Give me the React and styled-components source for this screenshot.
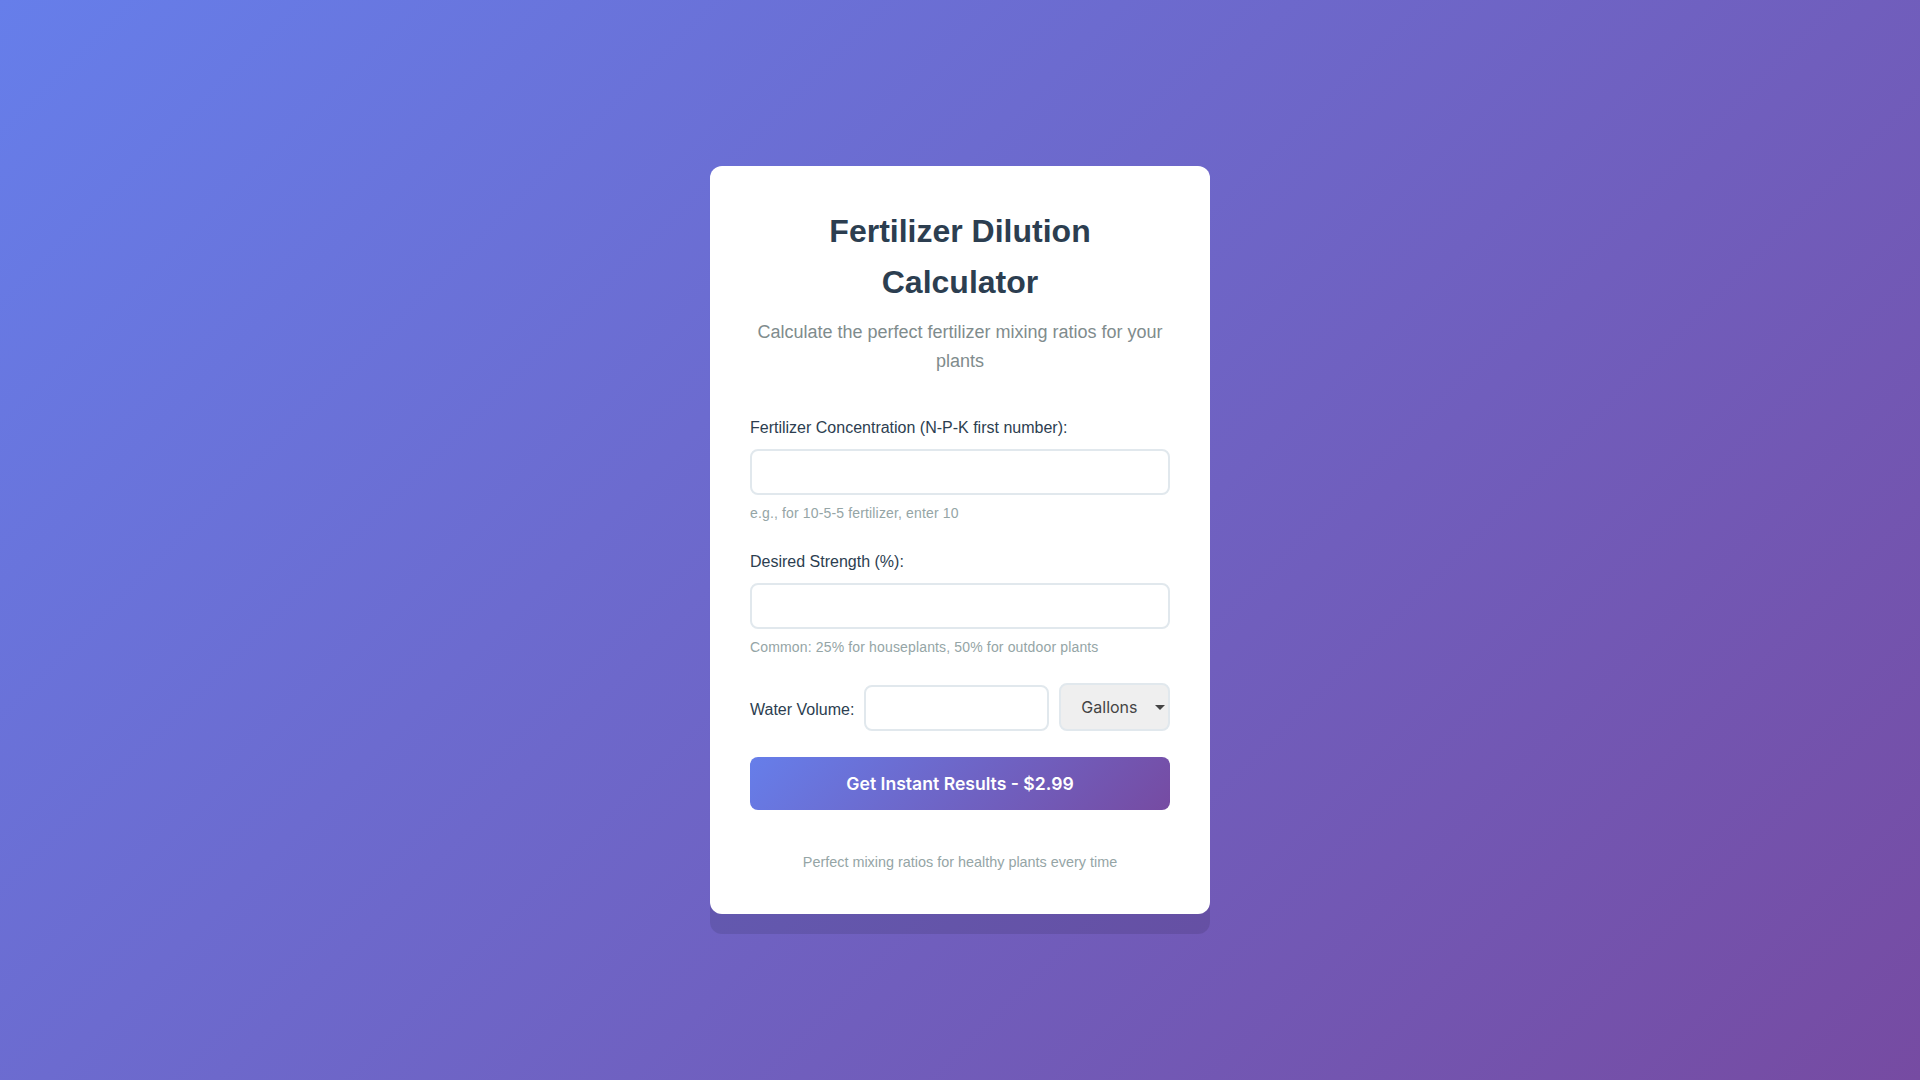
import styled, { createGlobalStyle } from "styled-components";

const GlobalStyle = createGlobalStyle`
  * {
    box-sizing: border-box;
  }
  html, body {
    margin: 0;
    padding: 0;
  }
  body {
    font-family: "Liberation Sans", Arial, sans-serif;
    line-height: 1.6;
    color: #2c3e50;
    background: linear-gradient(135deg, #667eea 0%, #764ba2 100%);
    min-height: 100vh;
  }
`;

export default function App() {
  return (
    <>
      <GlobalStyle />
      <Page>
        <Card>
          <Title>Fertilizer Dilution Calculator</Title>
          <Subtitle>Calculate the perfect fertilizer mixing ratios for your plants</Subtitle>

          <FormGroup>
            <Label htmlFor="concentration">Fertilizer Concentration (N-P-K first number):</Label>
            <Input id="concentration" type="number" />
            <Hint>e.g., for 10-5-5 fertilizer, enter 10</Hint>
          </FormGroup>

          <FormGroup>
            <Label htmlFor="strength">Desired Strength (%):</Label>
            <Input id="strength" type="number" />
            <Hint>Common: 25% for houseplants, 50% for outdoor plants</Hint>
          </FormGroup>

          <VolumeRow>
            <InlineLabel htmlFor="volume">Water Volume:</InlineLabel>
            <VolumeInput id="volume" type="number" />
            <SelectWrap>
              <Select defaultValue="gallons">
                <option value="gallons">Gallons</option>
                <option value="liters">Liters</option>
              </Select>
            </SelectWrap>
          </VolumeRow>

          <Button type="button">Get Instant Results - $2.99</Button>

          <Footer>Perfect mixing ratios for healthy plants every time</Footer>
        </Card>
      </Page>
    </>
  );
}

const Page = styled.div`
  min-height: 100vh;
  display: flex;
  align-items: center;
  justify-content: center;
`;

const Card = styled.div`
  width: 500px;
  background: #ffffff;
  border-radius: 12px;
  padding: 40px;
  box-shadow: 0 20px 0 rgba(0, 0, 0, 0.1);
  text-align: center;
`;

const Title = styled.h1`
  margin: 0 0 10px;
  font-size: 32px;
  line-height: 1.6;
  font-weight: 700;
  color: #2c3e50;
`;

const Subtitle = styled.p`
  margin: 0 0 39px;
  font-size: 18px;
  color: #7f8c8d;
`;

const FormGroup = styled.div`
  margin-bottom: 25px;
  text-align: left;
`;

const Label = styled.label`
  display: block;
  margin-bottom: 8px;
  font-size: 16px;
  color: #2c3e50;
`;

const Input = styled.input`
  display: block;
  width: 100%;
  height: 46px;
  padding: 12px;
  border: 2px solid #e1e8ed;
  border-radius: 8px;
  font-size: 16px;
  font-family: inherit;
  outline: none;
`;

const Hint = styled.div`
  margin-top: 7px;
  font-size: 14px;
  letter-spacing: 0.15px;
  color: #95a5a6;
`;

const VolumeRow = styled.div`
  display: flex;
  align-items: center;
  gap: 10px;
  margin-bottom: 26px;
  text-align: left;
`;

const InlineLabel = styled.label`
  font-size: 16px;
  color: #2c3e50;
  padding-top: 6px;
`;

const VolumeInput = styled(Input)`
  width: 185px;
  flex: none;
  margin-top: 2px;
`;

const SelectWrap = styled.div`
  position: relative;
  flex: 1;
  display: flex;

  &::after {
    content: "";
    position: absolute;
    right: 5px;
    top: 50%;
    margin-top: -2px;
    border-left: 5px solid transparent;
    border-right: 5px solid transparent;
    border-top: 5px solid #444;
    pointer-events: none;
  }
`;

const Select = styled.select`
  appearance: none;
  -webkit-appearance: none;
  width: 100%;
  height: 48px;
  padding: 0 20px 0 20px;
  border: 2px solid #e1e8ed;
  border-radius: 8px;
  background-color: #efefef;
  font-family: Inter, "Noto Sans", sans-serif;
  font-size: 16px;
  color: #444;
  outline: none;
`;

const Button = styled.button`
  display: block;
  width: 100%;
  height: 53px;
  border: none;
  border-radius: 8px;
  background: linear-gradient(135deg, #667eea 0%, #764ba2 100%);
  color: #ffffff;
  font-family: Inter, "Noto Sans", sans-serif;
  font-size: 17.6px;
  font-weight: 600;
  cursor: pointer;
`;

const Footer = styled.p`
  margin: 41px 0 0;
  font-size: 14.4px;
  color: #95a5a6;
`;
